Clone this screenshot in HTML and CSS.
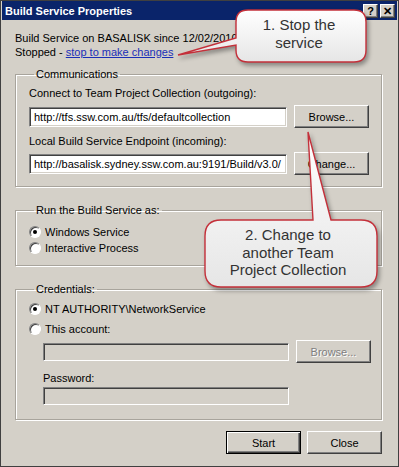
FILE: index.html
```html
<!DOCTYPE html>
<html lang="en">
<head>
    <meta charset="UTF-8">
    <title>Build Service Properties</title>
    <link rel="stylesheet" href="styles.css">
</head>
<body>
    <div class="window">
        <!-- Title bar -->
        <div class="titlebar">
            <span class="title">Build Service Properties</span>
            <div class="tb-buttons">
                <span class="tb-btn">?</span>
                <span class="tb-btn">&#x2715;</span>
            </div>
        </div>

        <div class="content">
            <p class="status">
                Build Service on BASALISK since 12/02/2010<br>
                Stopped - <a href="#" class="link">stop to make changes</a>
            </p>

            <fieldset class="group comms">
                <legend>Communications</legend>
                <div class="label">Connect to Team Project Collection (outgoing):</div>
                <div class="field-row row1">
                    <div class="textbox">http://tfs.ssw.com.au/tfs/defaultcollection</div>
                    <button class="btn">Browse...</button>
                </div>
                <div class="label label2">Local Build Service Endpoint (incoming):</div>
                <div class="field-row row2">
                    <div class="textbox">http://basalisk.sydney.ssw.com.au:9191/Build/v3.0/</div>
                    <button class="btn">Change...</button>
                </div>
            </fieldset>

            <fieldset class="group run">
                <legend>Run the Build Service as:</legend>
                <div class="radio-row"><span class="radio checked"></span>Windows Service</div>
                <div class="radio-row"><span class="radio"></span>Interactive Process</div>
            </fieldset>

            <fieldset class="group creds">
                <legend>Credentials:</legend>
                <div class="radio-row"><span class="radio checked"></span>NT AUTHORITY\NetworkService</div>
                <div class="radio-row account"><span class="radio"></span>This account:</div>
                <div class="field-row indent row3">
                    <div class="textbox disabled"></div>
                    <button class="btn disabled">Browse...</button>
                </div>
                <div class="label indent pw-label">Password:</div>
                <div class="field-row indent row4">
                    <div class="textbox disabled"></div>
                </div>
            </fieldset>

            <div class="dialog-buttons">
                <button class="btn default">Start</button>
                <button class="btn">Close</button>
            </div>
        </div>

        <!-- Annotation callouts -->
        <svg class="callouts" width="399" height="467" viewBox="0 0 399 467">
            <defs>
                <linearGradient id="bubble" x1="0" y1="0" x2="0" y2="1">
                    <stop offset="0" stop-color="#ffffff"/>
                    <stop offset="1" stop-color="#e6e6e6"/>
                </linearGradient>
            </defs>
            <path class="bubble" d="M248 10 H354 Q366 10 366 22 V50 Q366 62 354 62 H248 Q236 62 236 50 V45 L178 55 L236 38 V22 Q236 10 248 10 Z"/>
            <path class="bubble" d="M221 220 H313 L308 132 L331 220 H361 Q377 220 377 236 V271 Q377 287 361 287 H221 Q205 287 205 271 V236 Q205 220 221 220 Z"/>
        </svg>
        <div class="callout-text c1">1. Stop the<br>service</div>
        <div class="callout-text c2">2. Change to<br>another Team<br>Project Collection</div>
    </div>
</body>
</html>
```

FILE: styles.css
```css
/* General styling */
* {
    box-sizing: border-box;
}

body {
    margin: 0;
    font-family: "Liberation Sans", Arial, sans-serif;
    font-size: 11px;
    color: #000;
    background-color: #fff;
}

.window {
    position: relative;
    width: 399px;
    height: 467px;
    border: 1px solid #404040;
    padding: 0 1px 1px;
    background-color: #d4d0c8;
    overflow: hidden;
}

/* Title bar */
.titlebar {
    height: 19px;
    background-color: #0a246a;
    color: #fff;
    display: flex;
    align-items: center;
    justify-content: space-between;
    padding: 0 2px 0 3px;
}

.title {
    font-weight: bold;
    font-size: 11px;
}

.tb-buttons {
    display: flex;
    gap: 2px;
}

.tb-btn {
    width: 15px;
    height: 14px;
    background-color: #d4d0c8;
    color: #000;
    font-weight: bold;
    font-size: 11px;
    line-height: 12px;
    text-align: center;
    border: 1px solid;
    border-color: #fff #404040 #404040 #fff;
    box-shadow: inset -1px -1px 0 #808080;
}

.content {
    padding: 0 15px 0 13px;
}

.status {
    margin: 11px 0 0;
    line-height: 14px;
}

.link {
    color: #1a2fb8;
    text-decoration: underline;
}

/* Group boxes */
.group {
    margin: 0;
    border: 1px solid #a8a49c;
    box-shadow: inset 1px 1px 0 #fff, 1px 1px 0 #fff;
    padding: 0 12px 0 13px;
    min-width: 0;
}

.group legend {
    padding: 0 2px;
    margin-left: 5px;
    line-height: 14px;
}

.comms {
    margin-top: 8px;
    padding-top: 5px;
    padding-bottom: 11px;
}

.run {
    margin-top: 16px;
    padding-top: 7px;
    padding-bottom: 9px;
}

.creds {
    margin-top: 16px;
    padding-top: 5px;
    padding-bottom: 14px;
}

.label {
    line-height: 14px;
}

.label2 {
    margin-top: 6px;
}

.field-row {
    display: flex;
    align-items: center;
    gap: 7px;
    height: 23px;
}

.row1 {
    margin-top: 5px;
}

.row2 {
    margin-top: 4px;
}

.row3 {
    margin-top: 3px;
}

.row4 {
    margin-top: 2px;
    height: 18px;
}

.indent {
    padding-left: 14px;
}

.pw-label {
    margin-top: 8px;
}

.textbox {
    flex: 1;
    height: 20px;
    background-color: #fff;
    border: 1px solid;
    border-color: #808080 #fff #fff #808080;
    box-shadow: inset 1px 1px 0 #404040, inset -1px -1px 0 #d4d0c8;
    padding: 2px 4px;
    line-height: 14px;
    white-space: nowrap;
    overflow: hidden;
}

.textbox.disabled {
    background-color: #d4d0c8;
    height: 18px;
    flex: none;
    width: 246px;
}

/* Buttons */
.btn {
    width: 75px;
    height: 23px;
    font-family: inherit;
    font-size: 11px;
    color: #000;
    background-color: #d4d0c8;
    border: 1px solid;
    border-color: #fff #404040 #404040 #fff;
    box-shadow: inset -1px -1px 0 #808080;
    padding: 0;
    flex: none;
}

.btn.disabled {
    color: #808080;
    text-shadow: 1px 1px 0 #fff;
}

.btn.default {
    border: 1px solid #000;
    box-shadow: inset 1px 1px 0 #fff, inset -1px -1px 0 #404040, inset -2px -2px 0 #808080;
}

/* Radio buttons */
.radio-row {
    display: flex;
    align-items: center;
    height: 16px;
    line-height: 16px;
}

.account {
    margin-top: 4px;
}

.radio {
    width: 12px;
    height: 12px;
    border-radius: 50%;
    background-color: #fff;
    border: 1px solid;
    border-color: #808080 #fff #fff #808080;
    box-shadow: inset 1px 1px 0 #404040;
    margin-right: 4px;
    display: flex;
    align-items: center;
    justify-content: center;
}

.radio.checked::after {
    content: "";
    width: 4px;
    height: 4px;
    border-radius: 50%;
    background-color: #000;
}

.dialog-buttons {
    display: flex;
    justify-content: flex-end;
    gap: 6px;
    margin-top: 11px;
}

/* Callouts */
.callouts {
    position: absolute;
    left: -1px;
    top: -1px;
    pointer-events: none;
}

.bubble {
    fill: url(#bubble);
    stroke: #c4303a;
    stroke-width: 1.4;
    filter: drop-shadow(2px 3px 2px rgba(0, 0, 0, 0.35));
}

.callout-text {
    position: absolute;
    font-family: "Liberation Sans", Arial, sans-serif;
    font-size: 15px;
    color: #333;
    text-align: center;
}

.c1 {
    left: 235px;
    top: 15px;
    width: 126px;
    line-height: 18px;
}

.c2 {
    left: 204px;
    top: 225px;
    width: 166px;
    line-height: 17.5px;
}
```
